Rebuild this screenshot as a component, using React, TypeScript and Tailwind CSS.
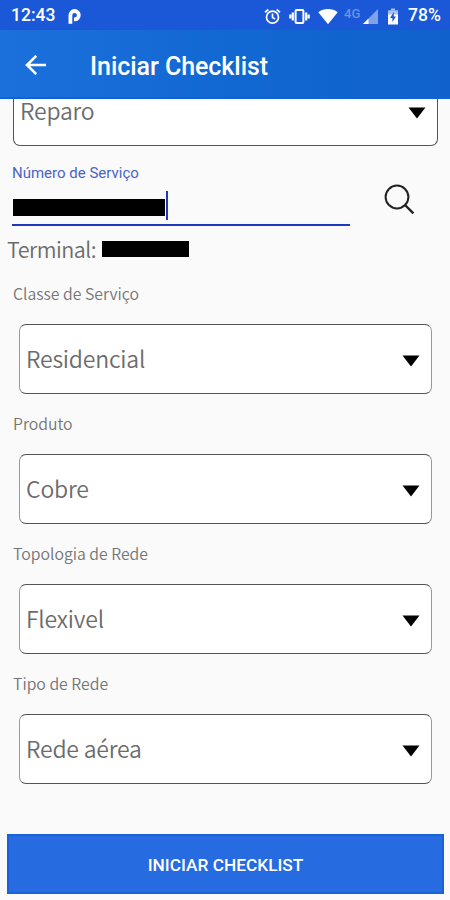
const fields = [
  { label: "Classe de Serviço", value: "Residencial" },
  { label: "Produto", value: "Cobre" },
  { label: "Topologia de Rede", value: "Flexivel" },
  { label: "Tipo de Rede", value: "Rede aérea" },
];

function StatusBar() {
  return (
    <div className="flex h-[30px] items-center bg-[#1a58d8] pt-[2px] text-white">
      <span className="ml-[11px] w-[44px] whitespace-nowrap text-[17.5px] font-medium leading-none">12:43</span>
      <svg className="ml-[13px]" width="14" height="17" viewBox="0 0 14 17">
        <path d="M2.4 15.7V7.2a4.2 4.2 0 1 1 4.6 4.2H6" fill="none" stroke="currentColor" strokeWidth="3.8" />
      </svg>
      {/* Device icons */}
      <svg className="ml-[182px]" width="17" height="17" viewBox="0 0 17 17" fill="none" stroke="currentColor" strokeWidth="1.7">
        <circle cx="8.5" cy="9.2" r="6" />
        <path d="M8.5 5.5v4l2.6 1.6M1 4.3l3.3-2.8M16 4.3l-3.3-2.8" />
      </svg>
      <svg className="ml-[8px]" width="21" height="17" viewBox="0 0 21 17" fill="none" stroke="currentColor" strokeWidth="2">
        <rect x="6.6" y="1.9" width="7.8" height="13.2" rx="1" />
        <path d="M3.8 4.5v8M17.2 4.5v8M1.3 6.5v4M19.7 6.5v4" strokeWidth="2.2" />
      </svg>
      <svg className="ml-[8px]" width="20" height="17" viewBox="0 0 20 17" fill="currentColor">
        <path d="M10 16.2.3 4.2C3 2 6.3.9 10 .9s7 1.1 9.7 3.3Z" />
      </svg>
      <span className="ml-[6px] w-[17px] -translate-y-[3px] text-[13px] font-medium leading-none text-[#6a92e6]">4G</span>
      <svg className="ml-[2px]" width="15" height="15" viewBox="0 0 15 15">
        <path d="M15 0v15H0Z" fill="#7fa2eb" />
        <path d="M5.5 9.5V15H0Z" fill="#fff" />
      </svg>
      <svg className="ml-[9px]" width="12" height="17" viewBox="0 0 12 17">
        <path d="M4 .5h4v2H4Z" fill="#a9c0f1" />
        <path d="M1 2.3h10V7H1Z" fill="#a9c0f1" />
        <path d="M1 6.5h10v10H1Z" fill="#fff" />
        <path d="M6.8 4 3 10h2.4v4L9 8.5H6.8Z" fill="#1a58d8" />
      </svg>
      <span className="ml-[9px] whitespace-nowrap text-[17.5px] font-medium leading-none">78%</span>
    </div>
  );
}

function AppBar() {
  return (
    <div className="flex h-[69px] items-center border-b-2 border-[#0c63dc] bg-linear-to-r from-[#1c70dc] via-[#1268d2] to-[#1061cb] text-white">
      <svg className="ml-[25px] mt-[3px]" width="22" height="22" viewBox="0 0 22 22" fill="none" stroke="currentColor" strokeWidth="2.6">
        <path d="M21 11H3M11.2 1.8 2 11l9.2 9.2" />
      </svg>
      <h1 className="ml-[43px] mt-[6px] whitespace-nowrap text-[25px] font-medium leading-none tracking-[-0.05px]">Iniciar Checklist</h1>
    </div>
  );
}

function Caret() {
  return (
    <svg width="18" height="12" viewBox="0 0 18 12">
      <path d="M.5.5h17L9 11.5Z" />
    </svg>
  );
}

function Select({ value }: { value: string }) {
  return (
    <div className="ml-[19px] flex h-[70px] w-[413px] items-center justify-between rounded-[7px] border border-x-[#999] border-y-[#555] bg-white pl-[6px] pr-[11px]">
      <span className="-mt-px font-['Noto_Sans_CJK_SC',sans-serif] text-[23px] font-[350] leading-none tracking-[-0.2px] text-[#6c6c6c]">{value}</span>
      <div className="mt-[4px]"><Caret /></div>
    </div>
  );
}

export default function App() {
  return (
    <div className="flex h-[900px] w-[450px] flex-col overflow-hidden bg-[#fafafa] font-[Roboto,sans-serif]">
      <StatusBar />
      <AppBar />

      {/* Lower part of the scrolled select */}
      <div className="ml-[13px] flex h-[47px] w-[425px] items-start justify-between rounded-b-[7px] border border-t-0 border-[#555] bg-white pl-[6px] pr-[11px]">
        <span className="font-['Noto_Sans_CJK_SC',sans-serif] text-[23px] font-[350] leading-none tracking-[-0.2px] text-[#6c6c6c]">Reparo</span>
        <div className="mt-[8px] h-[12px]"><Caret /></div>
      </div>

      <div className="flex h-[80px]">
        <div className="ml-[12px] flex w-[338px] flex-col border-b-2 border-[#2038bd]">
          <label className="mt-[19px] h-[16px] text-[15px] leading-[16px] text-[#4a63c6]">Número de Serviço</label>
          <div className="mt-[10px] flex h-[29px] items-center">
            <span className="ml-px mt-[3px] h-[17px] w-[152px] bg-black" />
            <span className="ml-px h-[29px] w-[2px] bg-[#2038bd]" />
          </div>
        </div>
        <svg className="ml-[34px] mt-[38px]" width="32" height="32" viewBox="0 0 32 32" fill="none" stroke="#222" strokeWidth="2">
          <circle cx="13" cy="13" r="11.4" />
          <path d="m21 21 8.4 8.4" strokeWidth="2.4" />
        </svg>
      </div>

      <div className="flex h-[38px] items-start">
        <span className="ml-[7px] mt-[12px] w-[95px] whitespace-nowrap font-['Noto_Sans_CJK_SC',sans-serif] text-[21.5px] font-[350] leading-none tracking-[-0.5px] text-[#6c6c6c]">Terminal:</span>
        <span className="mt-[15px] h-[16px] w-[87px] bg-black" />
      </div>

      {fields.map((field) => (
        <div key={field.label}>
          <div className="flex h-[60px] items-center pl-[13px]">
            <span className="font-['Noto_Sans_CJK_SC',sans-serif] text-[15.8px] font-[350] leading-none text-[#757575]">{field.label}</span>
          </div>
          <Select value={field.value} />
        </div>
      ))}

      <button className="ml-[7px] mt-[50px] h-[60px] w-[437px] border-2 border-[#1762db] bg-[#266bdf] pt-[3px] text-[17.3px] font-medium leading-none text-white">
        INICIAR CHECKLIST
      </button>
    </div>
  );
}
